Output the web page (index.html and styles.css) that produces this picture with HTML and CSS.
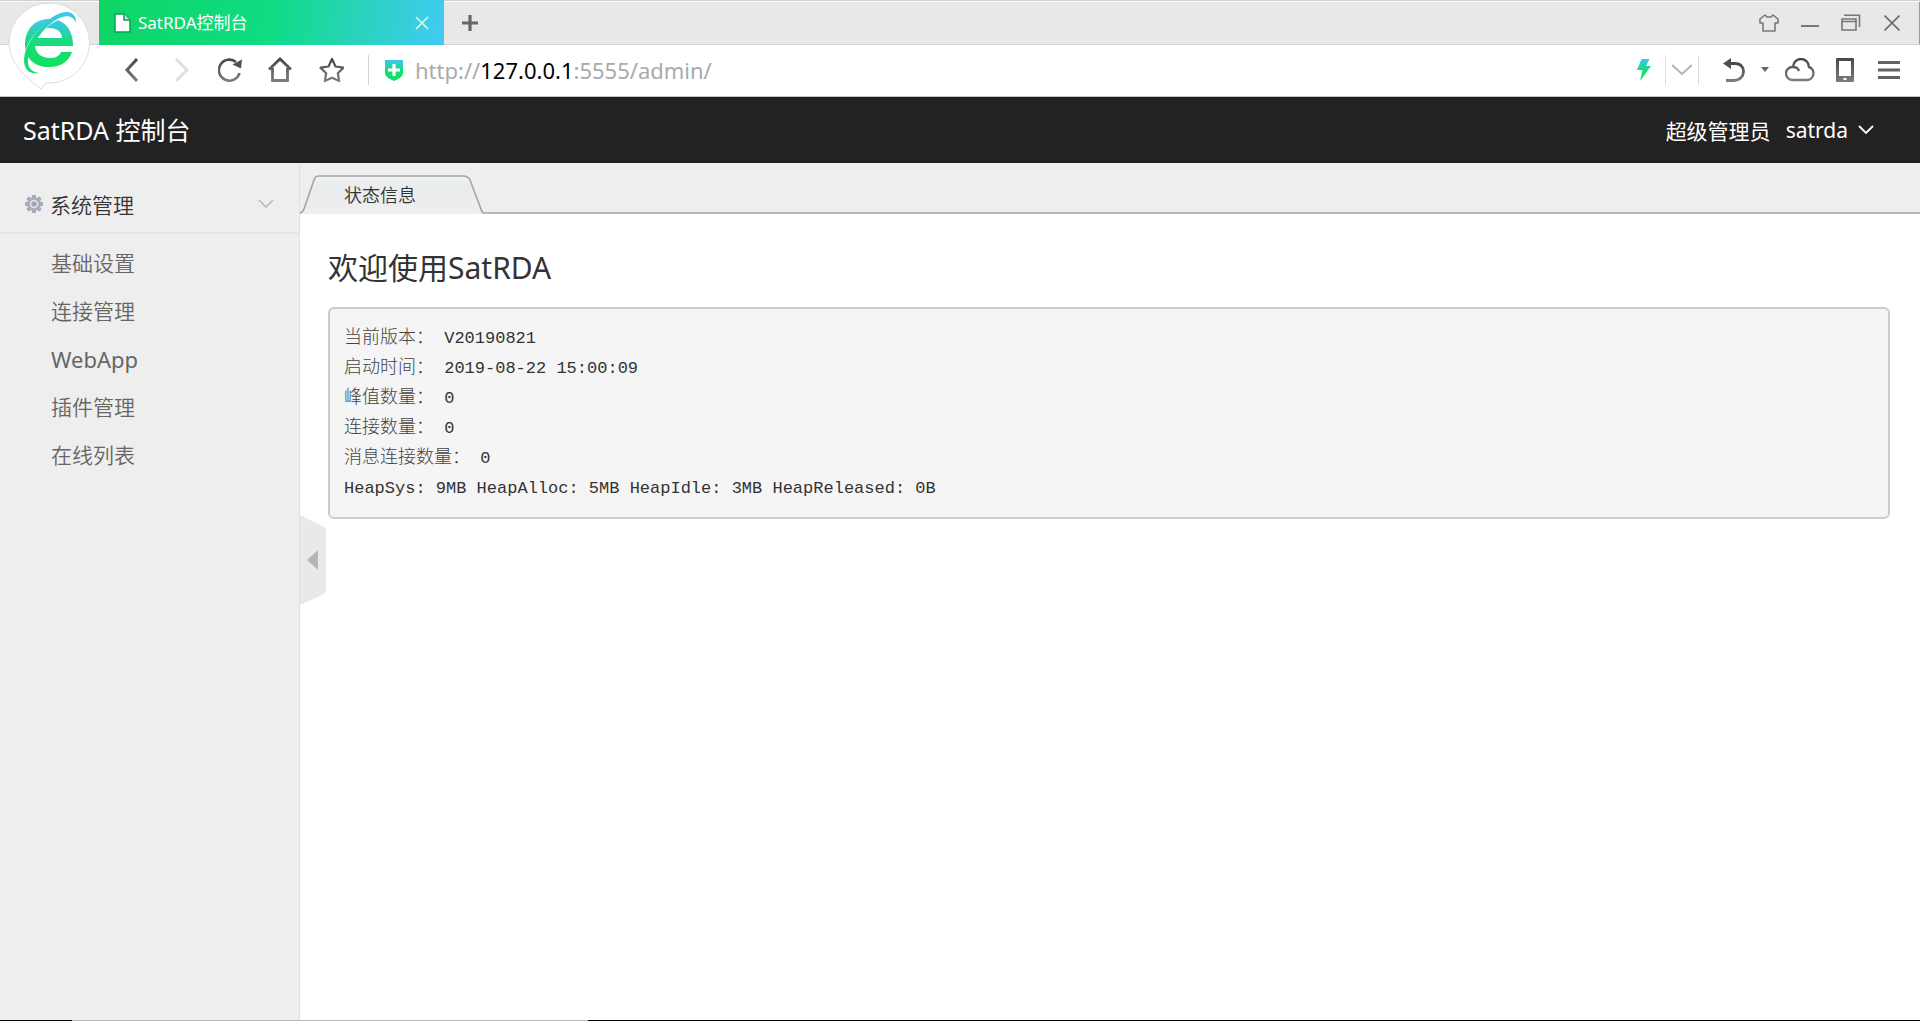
FILE: index.html
```html
<!DOCTYPE html>
<html lang="zh-CN">
<head>
<meta charset="utf-8">
<title>SatRDA控制台</title>
<link rel="stylesheet" href="styles.css">
</head>
<body>
<svg class="defs" width="0" height="0" aria-hidden="true">
  <defs>
    <linearGradient id="ink" x1="0" y1="0" x2="0" y2="1"><stop offset="0" stop-color="#484848"/><stop offset="1" stop-color="#7c7c7c"/></linearGradient>
    <linearGradient id="brand" x1="0" y1="0" x2="0" y2="1"><stop offset="0" stop-color="#42c5f5"/><stop offset=".5" stop-color="#14dd78"/><stop offset="1" stop-color="#12e060"/></linearGradient>
  </defs>
</svg>

<div class="browser">
  <button class="logo" aria-label="浏览器菜单">
    <svg width="84" height="90" viewBox="0 0 84 90">
      <path d="M41 3a40 40 0 0 1 1 80h-4l-5 6C17 76 2 65 1 43A40 40 0 0 1 41 3z" fill="#fff" stroke="#dcdcdc"/>
      <path d="M17 45C17 28 28 19 41 19c16 0 24 11 24 27H27c1 8 7 12 15 12 6 0 9-2 11-6h11c-3 9-11 15-23 15-14 0-24-8-24-22zM27 38h27c0-6-5-10-13-10s-12 4-14 10z" fill="url(#brand)"/>
      <path d="M19 51C27 32 44 17 62 14" fill="none" stroke="#fff" stroke-width="4"/>
      <path d="M31 73c-13 2-17-8-14-20C22 36 43 12 59 12c6 0 9 4 9 11-2-6-7-8-14-6C41 21 26 40 21 54c-3 10 0 18 10 19z" fill="url(#brand)"/>
    </svg>
  </button>
  <div class="tabstrip">
    <div class="page-tab">
      <svg width="17" height="20" viewBox="0 0 17 20"><path d="M1 1h9l6 6v12H1z" fill="#fff" stroke="#0aa157" stroke-width="1.5"/><path d="M10 1v6h6" fill="#b9efd2" stroke="#0aa157" stroke-width="1.5"/></svg>
      <span class="page-tab-title">SatRDA控制台</span>
      <button aria-label="关闭标签页"><svg width="14" height="14" viewBox="0 0 14 14"><path d="M1 1l12 12M13 1L1 13" stroke="#d8f7ef" stroke-width="1.6"/></svg></button>
    </div>
    <button class="new-tab" aria-label="新建标签页"><svg width="16" height="16" viewBox="0 0 16 16"><path d="M8 0v16M0 8h16" stroke="#666" stroke-width="3.2"/></svg></button>
    <div class="window-tools">
      <button aria-label="皮肤"><svg width="20" height="18" viewBox="0 0 20 18"><path d="M6 1L1 5v4h3v8h12V9h3V5l-5-4-2 2H8z" fill="none" stroke="#777" stroke-width="1.6" stroke-linejoin="round"/></svg></button>
      <button aria-label="最小化"><svg width="18" height="18" viewBox="0 0 18 18"><path d="M0 12h18" stroke="#777" stroke-width="2"/></svg></button>
      <button aria-label="还原"><svg width="20" height="18" viewBox="0 0 20 18"><path d="M1 5h14v11H1zM1 7.500h14M3 1.200h15.500V13" fill="none" stroke="#777" stroke-width="1.6"/></svg></button>
      <button aria-label="关闭"><svg width="18" height="18" viewBox="0 0 18 18"><path d="M1.500 1.500l15 15M16.500 1.500l-15 15" stroke="#666" stroke-width="1.7"/></svg></button>
    </div>
  </div>
  <div class="toolbar">
    <nav class="nav-tools" aria-label="浏览">
      <button aria-label="后退"><svg width="26" height="26" viewBox="0 0 26 26"><path d="M19 2L9 13l10 11" fill="none" stroke="url(#ink)" stroke-width="3"/></svg></button>
      <button aria-label="前进"><svg width="26" height="26" viewBox="0 0 26 26"><path d="M8 2l11 11L8 24" fill="none" stroke="#dfdfe1" stroke-width="3"/></svg></button>
      <button aria-label="刷新"><svg width="26" height="26" viewBox="0 0 26 26"><path d="M21.500 16A10.500 10.500 0 1 1 18 5" fill="none" stroke="url(#ink)" stroke-width="2.600"/><path d="M24 2.500l-1 9-8.500-4z" fill="#505050"/></svg></button>
      <button aria-label="主页"><svg width="26" height="26" viewBox="0 0 26 26"><path d="M1 12.500L12 2l11 10.500M4.500 11v12.500h15V11" fill="none" stroke="url(#ink)" stroke-width="2.800"/></svg></button>
      <button aria-label="收藏"><svg width="26" height="26" viewBox="0 0 26 26"><path d="M14 2l3.500 7.500 8 1.200-5.700 5.600L21.200 24 14 20.800 6.800 24l1.400-7.700-5.700-5.600 8-1.200z" fill="none" stroke="url(#ink)" stroke-width="2.200" stroke-linejoin="round"/></svg></button>
    </nav>
    <div class="address">
      <svg width="20" height="24" viewBox="0 0 20 24"><path d="M1 2h18v13c0 4-5 6-9 8-4-2-9-4-9-8z" fill="url(#brand)"/><path d="M10 6v12M4 12h12" stroke="#fff" stroke-width="3.200"/></svg>
      <a class="url" href="http://127.0.0.1:5555/admin/">http://<b>127.0.0.1</b>:5555/admin/</a>
    </div>
    <div class="page-tools">
      <button aria-label="极速模式"><svg width="14" height="22" viewBox="0 0 14 22"><path d="M4.500 0h8L9 7h5L3 22 5.500 11H0z" fill="url(#brand)"/></svg></button>
      <button class="mode" aria-label="切换模式"><svg width="20" height="12" viewBox="0 0 20 12"><path d="M0 1l10 9 10-9" fill="none" stroke="#b2b2b2" stroke-width="2"/></svg></button>
      <button aria-label="撤销"><svg width="22" height="26" viewBox="0 0 22 26"><path d="M5 6.500h7c12 0 11 17-1 17H3" fill="none" stroke="url(#ink)" stroke-width="2.800"/><path d="M0 6.500L8 1v11z" fill="#505050"/></svg></button>
      <button aria-label="撤销列表"><svg width="8" height="5" viewBox="0 0 8 5"><path d="M0 0h8L4 5z" fill="#666"/></svg></button>
      <button class="cloud" aria-label="云"><svg width="30" height="24" viewBox="0 0 30 24"><path d="M8 22a6.500 6.500 0 0 1-1-13h1a8 8 0 0 1 16 0 6.700 6.700 0 0 1-2 13zM8 9c3 0 5 1 6 4" fill="none" stroke="url(#ink)" stroke-width="2.400"/></svg></button>
      <button class="phone" aria-label="手机"><svg width="18" height="24" viewBox="0 0 18 24"><rect width="18" height="24" rx="1" fill="url(#ink)"/><path d="M3 3h12v15H3zM7.500 20h3v2h-3z" fill="#fff"/></svg></button>
      <button aria-label="菜单"><svg width="22" height="20" viewBox="0 0 22 20"><path d="M0 2.500h22M0 10h22M0 17.500h22" stroke="#626262" stroke-width="3"/></svg></button>
    </div>
  </div>
</div>

<header class="app-header">
  <h1>SatRDA 控制台</h1>
  <button class="user">超级管理员<span>satrda</span><svg width="16" height="10" viewBox="0 0 16 10"><path d="M1 1l7 7 7-7" fill="none" stroke="#fff" stroke-width="1.800"/></svg></button>
</header>

<div class="app">
  <aside class="sidebar">
    <button class="group">
      <svg width="20" height="20" viewBox="0 0 20 20"><g stroke="#a5adb8" stroke-width="4"><path d="M10 1v18M1 10h18M3.600 3.600l12.800 12.800M16.400 3.600L3.600 16.400"/></g><circle cx="10" cy="10" r="7" fill="#a5adb8"/><circle cx="10" cy="10" r="3.500" fill="none" stroke="#e3e6ea" stroke-width="1.500"/><circle cx="10" cy="10" r="1.500" fill="#98a1ae"/></svg>
      <span>系统管理</span>
      <svg width="16" height="10" viewBox="0 0 16 10"><path d="M1 1l7 7 7-7" fill="none" stroke="#b8b8b8" stroke-width="1.600"/></svg>
    </button>
    <ul class="menu">
      <li><a href="#base">基础设置</a></li>
      <li><a href="#links">连接管理</a></li>
      <li><a class="latin" href="#webapp">WebApp</a></li>
      <li><a href="#plugins">插件管理</a></li>
      <li><a href="#online">在线列表</a></li>
    </ul>
    <button class="collapse" aria-label="收起侧栏"><svg width="26" height="90" viewBox="0 0 26 90"><path d="M0 0l22 11q4 2 4 5v59q0 3-4 5L0 90z" fill="#e9e9e9"/><path d="M18 35v20L7 45z" fill="#b5b5b5"/></svg></button>
  </aside>
  <main class="content">
    <div class="tabs">
      <button class="tab">
        <svg width="184" height="39" viewBox="0 0 184 39"><defs><linearGradient id="tabfill" x1="0" y1="0" x2="0" y2="1"><stop offset="0" stop-color="#f1f3f3"/><stop offset=".3" stop-color="#e9ecec"/><stop offset="1" stop-color="#eeeef0"/></linearGradient></defs><path d="M0 39q3-1 4-4L14 5q1-4 5-4h144q5 0 7 4l11 29q1 4 3 5z" fill="url(#tabfill)"/><path d="M0 38q3-1 4-4L14 5q1-4 5-4h144q5 0 7 4l11 29q1 4 3 4" fill="none" stroke="#a3a5a5" stroke-width="1.600"/></svg>
        <span>状态信息</span>
      </button>
    </div>
    <section class="panel">
      <h2>欢迎使用SatRDA</h2>
      <pre class="status"><span>当前版本：</span> V20190821
<span>启动时间：</span> 2019-08-22 15:00:09
<span>峰值数量：</span> 0
<span>连接数量：</span> 0
<span>消息连接数量：</span> 0
HeapSys: 9MB HeapAlloc: 5MB HeapIdle: 3MB HeapReleased: 0B</pre>
    </section>
  </main>
</div>
<div class="taskbar-edge"></div>
</body>
</html>
```
FILE: styles.css
```css
* { box-sizing: border-box; }

body {
  margin: 0;
  min-height: 100vh;
  display: flex;
  flex-direction: column;
  background: #fff;
  color: #333;
  font-family: "Noto Sans", "Noto Sans CJK SC", sans-serif;
  font-size: 21px;
}

button {
  display: flex;
  align-items: center;
  padding: 0;
  border: 0;
  background: none;
  color: inherit;
  font: inherit;
}

svg { display: block; flex: none; }
a { color: inherit; text-decoration: none; }
.defs { position: absolute; }

/* Browser frame */
.browser { position: relative; border-bottom: 1px solid #c4c4c4; }
.logo { position: absolute; left: 8px; top: 0; }

.tabstrip {
  display: flex;
  align-items: center;
  height: 45px;
  padding-left: 99px;
  background: #e8e8e8;
  box-shadow: inset 0 1px #d0d0d0, inset 0 2px #fafafa, inset 0 -1px #d2d2d2, inset -1px 0 #999;
}

.page-tab {
  display: flex;
  align-items: center;
  width: 345px;
  height: 45px;
  padding: 0 15px;
  gap: 7px;
  background: linear-gradient(100deg, #0fd564, #0fdc84 50%, #42caf5);
  color: #fff;
  font-size: 17px;
}
.page-tab-title { flex: 1; padding-bottom: 2px; }
.new-tab { margin-left: 18px; }

.window-tools {
  display: flex;
  gap: 22px;
  margin-left: auto;
  padding-right: 19px;
}

.toolbar {
  display: flex;
  align-items: center;
  height: 51px;
  padding: 0 20px 2px 118px;
}
.nav-tools { display: flex; gap: 24px; }

.address {
  display: flex;
  align-items: center;
  flex: 1;
  height: 30px;
  margin-left: 24px;
  padding-left: 15px;
  gap: 11px;
  border-left: 1px solid #d4d4d4;
}
.url { color: #aaa; font-size: 22px; }
.url b { color: #000; font-weight: 400; }

.page-tools { display: flex; align-items: center; gap: 16px; }
.page-tools .mode {
  height: 30px;
  margin: 0 8px 0 -2px;
  padding: 0 6px;
  border: 1px solid #dcdcdc;
  border-width: 0 1px;
}
.page-tools .cloud { margin-right: 5px; }
.page-tools .phone { margin-right: 8px; }

/* Console header */
.app-header {
  display: flex;
  align-items: center;
  justify-content: space-between;
  height: 66px;
  padding: 0 46px 0 23px;
  background: #222;
  color: #fff;
}
.app-header h1 { margin: 0 0 3px; font-size: 25px; font-weight: 400; }
.user { gap: 10px; }
.user span { margin-left: 5px; }

.app { flex: 1; display: flex; }

/* Sidebar */
.sidebar {
  position: relative;
  width: 300px;
  flex: none;
  background: #eee;
  border-right: 1px solid #e0e0e0;
}
.group {
  width: 100%;
  height: 71px;
  padding: 12px 25px 0 24px;
  gap: 6px;
  border-bottom: 2px solid #e5e5e5;
  text-align: left;
  font-weight: 350;
}
.group span { flex: 1; }
.menu {
  margin: 0;
  padding: 5px 0 0 51px;
  list-style: none;
  color: #666;
  font-weight: 350;
}
.menu a { display: block; line-height: 48px; }
.menu .latin { font-size: 22px; font-weight: 400; }
.collapse { position: absolute; left: 300px; top: 352px; }

/* Content */
.content { flex: 1; min-width: 0; }
.tabs {
  display: flex;
  align-items: flex-end;
  height: 51px;
  background: #eeeef0;
  border-bottom: 2px solid #b5b6b8;
}
.tab { position: relative; margin-bottom: -2px; font-size: 18px; font-weight: 350; }
.tab span { position: absolute; left: 44px; top: 6px; }

.panel { padding: 31px 30px 30px 28px; }
.panel h2 { margin: 0; font-size: 30px; font-weight: 400; line-height: 46px; }
.status {
  margin: 16px 0 0;
  padding: 15px 14px 13px;
  border: 2px solid #ccc;
  border-radius: 6px;
  background: #f5f5f5;
  font-family: "Liberation Mono", "Noto Sans CJK SC", monospace;
  font-size: 17px;
  line-height: 30px;
}
.status span { color: #444; font-size: 18px; font-weight: 300; line-height: 18px; }

.taskbar-edge {
  height: 1px;
  background: linear-gradient(90deg, #000 72px, #b8b8b8 72px 588px, #000 588px);
}
```
